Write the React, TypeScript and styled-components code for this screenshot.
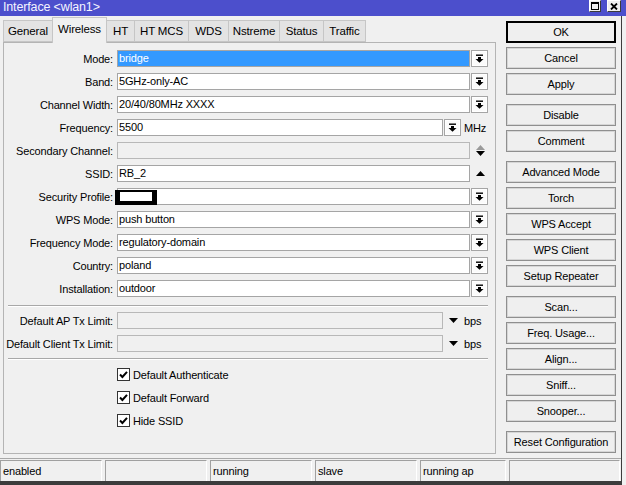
import styled, { createGlobalStyle } from "styled-components"

const GlobalStyle = createGlobalStyle`
  html, body {
    margin: 0;
    padding: 0;
    background: #f0f0f0;
  }
  body {
    font-family: "Liberation Sans", Arial, sans-serif;
    font-size: 11px;
    letter-spacing: -0.15px;
    color: #000;
  }
  * { box-sizing: border-box; }
`

const tabs = [
  { name: "General", w: 50 },
  { name: "Wireless", w: 55, active: true },
  { name: "HT", w: 29 },
  { name: "HT MCS", w: 55 },
  { name: "WDS", w: 41 },
  { name: "Nstreme", w: 52 },
  { name: "Status", w: 45 },
  { name: "Traffic", w: 43 },
]

const buttonGroups = [
  ["OK", "Cancel", "Apply"],
  ["Disable", "Comment"],
  ["Advanced Mode", "Torch", "WPS Accept", "WPS Client", "Setup Repeater"],
  ["Scan...", "Freq. Usage...", "Align...", "Sniff...", "Snooper..."],
  ["Reset Configuration"],
]

const statusCells = [
  { text: "enabled", w: 102 },
  { text: "", w: 102 },
  { text: "running", w: 102 },
  { text: "slave", w: 102 },
  { text: "running ap", w: 86 },
  { text: "", w: 111 },
]

const DropIcon = () => (
  <svg width="9" height="9" viewBox="0 0 9 9">
    <rect x="1" y="0.5" width="7" height="1.4" fill="#000" />
    <rect x="3" y="3" width="3" height="2" fill="#000" />
    <polygon points="0.5,5 8.5,5 4.5,8.8" fill="#000" />
  </svg>
)

const Tri = ({ up, color = "#000" }: { up?: boolean; color?: string }) => (
  <svg width="9" height="5" viewBox="0 0 9 5">
    <polygon points={up ? "0,5 9,5 4.5,0" : "0,0 9,0 4.5,5"} fill={color} />
  </svg>
)

const CheckMark = () => (
  <svg width="9" height="9" viewBox="0 0 9 9">
    <path d="M1 4.5 L3.4 7 L8 1.8" stroke="#000" strokeWidth="2" fill="none" />
  </svg>
)

export default function App() {
  return (
    <>
      <GlobalStyle />
      <Window>
        <TitleBar>
          <Title>Interface &lt;wlan1&gt;</Title>
          <TitleButtons>
            <TitleBtn $w={12}>
              <svg width="8" height="8" viewBox="0 0 8 8">
                <rect x="0.5" y="0.5" width="7" height="7" fill="none" stroke="#000" />
                <rect x="0" y="0" width="8" height="2" fill="#000" />
              </svg>
            </TitleBtn>
            <TitleBtn $w={14}>
              <svg width="8" height="7" viewBox="0 0 8 7">
                <path d="M1 0.5 L7 6.5 M7 0.5 L1 6.5" stroke="#000" strokeWidth="1.8" />
              </svg>
            </TitleBtn>
          </TitleButtons>
        </TitleBar>
        <Frame>
          <Body>
            <Main>
              <TabBar>
                {tabs.map((t) => (
                  <Tab key={t.name} $w={t.w} $active={!!t.active}>
                    {t.name}
                  </Tab>
                ))}
              </TabBar>
              <Panel>
                <Row>
                  <Label>Mode:</Label>
                  <Input $w={353} $selected>bridge</Input>
                  <DropBtn><DropIcon /></DropBtn>
                </Row>
                <Row>
                  <Label>Band:</Label>
                  <Input $w={353}>5GHz-only-AC</Input>
                  <DropBtn><DropIcon /></DropBtn>
                </Row>
                <Row>
                  <Label>Channel Width:</Label>
                  <Input $w={353}>20/40/80MHz XXXX</Input>
                  <DropBtn><DropIcon /></DropBtn>
                </Row>
                <Row>
                  <Label>Frequency:</Label>
                  <Input $w={326}>5500</Input>
                  <DropBtn><DropIcon /></DropBtn>
                  <Unit>MHz</Unit>
                </Row>
                <Row>
                  <Label>Secondary Channel:</Label>
                  <Input $w={353} $disabled />
                  <Arrows>
                    <Tri up color="#9a9a9a" />
                    <Tri />
                  </Arrows>
                </Row>
                <Row>
                  <Label>SSID:</Label>
                  <Input $w={353}>RB_2</Input>
                  <Arrows><Tri up /></Arrows>
                </Row>
                <Row>
                  <Label>Security Profile:</Label>
                  <Input $w={353}>
                    <Redact />
                  </Input>
                  <DropBtn><DropIcon /></DropBtn>
                </Row>
                <Row>
                  <Label>WPS Mode:</Label>
                  <Input $w={353}>push button</Input>
                  <DropBtn><DropIcon /></DropBtn>
                </Row>
                <Row>
                  <Label>Frequency Mode:</Label>
                  <Input $w={353}>regulatory-domain</Input>
                  <DropBtn><DropIcon /></DropBtn>
                </Row>
                <Row>
                  <Label>Country:</Label>
                  <Input $w={353}>poland</Input>
                  <DropBtn><DropIcon /></DropBtn>
                </Row>
                <Row>
                  <Label>Installation:</Label>
                  <Input $w={353}>outdoor</Input>
                  <DropBtn><DropIcon /></DropBtn>
                </Row>
                <Separator $top={2} />
                <Row>
                  <Label>Default AP Tx Limit:</Label>
                  <Input $w={326} $disabled />
                  <Arrows><Tri /></Arrows>
                  <Unit>bps</Unit>
                </Row>
                <Row>
                  <Label>Default Client Tx Limit:</Label>
                  <Input $w={326} $disabled />
                  <Arrows><Tri /></Arrows>
                  <Unit>bps</Unit>
                </Row>
                <Separator $top={0} />
                <Checks>
                  {["Default Authenticate", "Default Forward", "Hide SSID"].map((c) => (
                    <Row key={c}>
                      <Label />
                      <CheckBox><CheckMark /></CheckBox>
                      <CheckText>{c}</CheckText>
                    </Row>
                  ))}
                </Checks>
              </Panel>
            </Main>
            <Side>
              {buttonGroups.map((g, i) => (
                <Group key={i}>
                  {g.map((b) => (
                    <Btn key={b} $default={b === "OK"}>{b}</Btn>
                  ))}
                </Group>
              ))}
            </Side>
          </Body>
          <StatusBar>
            {statusCells.map((c, i) => (
              <Cell key={i} $w={c.w}>{c.text}</Cell>
            ))}
          </StatusBar>
        </Frame>
      </Window>
    </>
  )
}

const Window = styled.div`
  width: 626px;
  height: 485px;
  display: flex;
  flex-direction: column;
  overflow: hidden;
`

const TitleBar = styled.div`
  height: 16px;
  flex: none;
  background: #4c4fcc;
  display: flex;
  justify-content: space-between;
  align-items: flex-start;
  padding-left: 3px;
`

const Title = styled.div`
  color: #f4f4ff;
  font-size: 12.5px;
  line-height: 15px;
`

const TitleButtons = styled.div`
  display: flex;
  gap: 6px;
  padding-right: 5px;
`

const TitleBtn = styled.div<{ $w: number }>`
  width: ${({ $w }) => $w}px;
  height: 12px;
  background: #efefef;
  border-top: 1px solid #ffffff;
  border-left: 1px solid #ffffff;
  border-right: 1px solid #3a3a3a;
  border-bottom: 1px solid #3a3a3a;
  display: flex;
  align-items: center;
  justify-content: center;
`

const Frame = styled.div`
  width: 622px;
  flex: 1;
  display: flex;
  flex-direction: column;
  border-right: 1px solid #3c3c3c;
  border-bottom: 4px solid #3c3c3c;
`

const Body = styled.div`
  flex: 1;
  display: flex;
  align-items: flex-start;
`

const Main = styled.div`
  margin-left: 3px;
  margin-top: 1px;
  width: 493px;
  display: flex;
  flex-direction: column;
`

const TabBar = styled.div`
  height: 26px;
  margin-bottom: -1px;
  display: flex;
  align-items: flex-end;
  position: relative;
  z-index: 1;
`

const Tab = styled.div<{ $w: number; $active: boolean }>`
  width: ${({ $w }) => $w}px;
  height: ${({ $active }) => ($active ? 26 : 22)}px;
  margin-bottom: ${({ $active }) => ($active ? 0 : 1)}px;
  background: ${({ $active }) => ($active ? "#f0f0f0" : "#e3e3e3")};
  border: 1px solid #c6c6c6;
  border-bottom: ${({ $active }) => ($active ? "none" : "1px solid #c6c6c6")};
  margin-right: -1px;
  display: flex;
  align-items: center;
  justify-content: center;
  white-space: nowrap;
  font-size: 11.5px;
  padding-bottom: ${({ $active }) => ($active ? 3 : 0)}px;
`

const Panel = styled.div`
  height: 412px;
  border: 1px solid #b4b4b4;
  background: #f0f0f0;
  padding: 7px 7px 0 0;
  display: flex;
  flex-direction: column;
  gap: 6px;
`

const Row = styled.div`
  height: 17px;
  display: flex;
  align-items: center;
`

const Label = styled.div`
  width: 109px;
  margin-right: 4px;
  text-align: right;
  white-space: nowrap;
  flex: none;
`

const Input = styled.div<{ $w: number; $selected?: boolean; $disabled?: boolean }>`
  position: relative;
  width: ${({ $w }) => $w}px;
  height: 17px;
  flex: none;
  border: 1px solid ${({ $disabled }) => ($disabled ? "#b8b8b8" : "#a5a5a5")};
  background: ${({ $selected, $disabled }) =>
    $selected ? "#3399ff" : $disabled ? "#f0f0f0" : "#ffffff"};
  color: ${({ $selected }) => ($selected ? "#ffffff" : "#000000")};
  padding-left: 1px;
  line-height: 15px;
  white-space: nowrap;
`

const Redact = styled.div`
  position: absolute;
  left: -3px;
  top: 1px;
  width: 42px;
  height: 15px;
  background: #ffffff;
  border-style: solid;
  border-color: #000000;
  border-width: 2px 5px 4px 5px;
`

const DropBtn = styled.div`
  width: 17px;
  height: 17px;
  margin-left: 1px;
  flex: none;
  border: 1px solid #a5a5a5;
  background: #fbfbfb;
  box-shadow: inset 0 0 0 1px #ffffff;
  display: flex;
  align-items: center;
  justify-content: center;
`

const Arrows = styled.div`
  width: 17px;
  height: 17px;
  margin-left: 1px;
  flex: none;
  display: flex;
  flex-direction: column;
  align-items: center;
  justify-content: center;
  gap: 1px;
  padding-left: 1px;
`

const Unit = styled.div`
  margin-left: 3px;
  white-space: nowrap;
`

const Separator = styled.div<{ $top: number }>`
  height: 2px;
  margin: ${({ $top }) => $top}px 0 -1px 4px;
  border-top: 1px solid #a8a8a8;
  border-bottom: 1px solid #ffffff;
  flex: none;
`

const Checks = styled.div`
  margin-top: 1px;
  display: flex;
  flex-direction: column;
  gap: 6px;
`

const CheckBox = styled.div`
  width: 13px;
  height: 13px;
  flex: none;
  border: 1px solid #333333;
  background: #ffffff;
  display: flex;
  align-items: center;
  justify-content: center;
`

const CheckText = styled.div`
  margin-left: 3px;
  white-space: nowrap;
`

const Side = styled.div`
  margin-left: 10px;
  margin-top: 5px;
  width: 110px;
  display: flex;
  flex-direction: column;
  gap: 9px;
`

const Group = styled.div`
  display: flex;
  flex-direction: column;
  gap: 4px;
`

const Btn = styled.div<{ $default?: boolean }>`
  height: 22px;
  border: 1px solid ${({ $default }) => ($default ? "#000000" : "#8f8f8f")};
  box-shadow: inset 0 0 0 1px ${({ $default }) => ($default ? "#000000" : "#d6d6d6")};
  background: #efefef;
  display: flex;
  align-items: center;
  justify-content: center;
  white-space: nowrap;
`

const StatusBar = styled.div`
  height: 23px;
  flex: none;
  border-top: 1px solid #a8a8a8;
  padding-top: 1px;
  display: flex;
  gap: 3px;
`

const Cell = styled.div<{ $w: number }>`
  width: ${({ $w }) => $w}px;
  height: 21px;
  flex: none;
  border-top: 1px solid #a0a0a0;
  border-left: 1px solid #a0a0a0;
  border-right: 1px solid #ffffff;
  padding-left: 2px;
  line-height: 20px;
  white-space: nowrap;
`
